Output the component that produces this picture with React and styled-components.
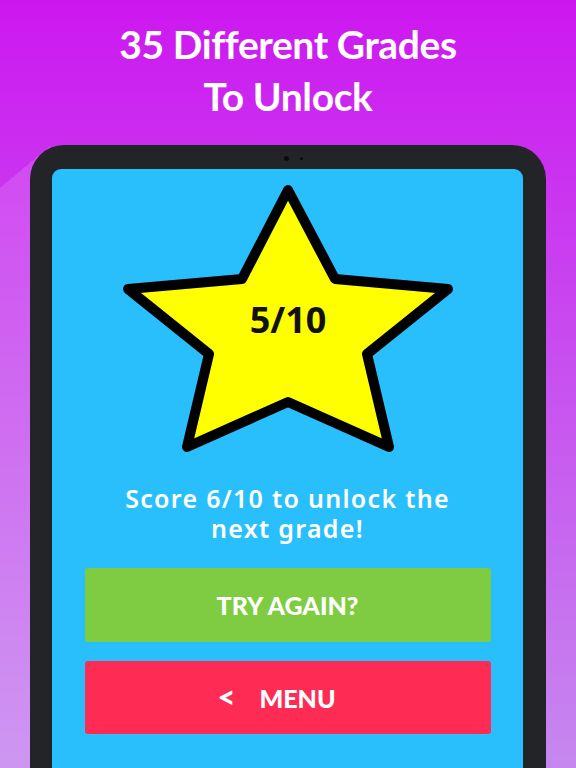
import React from 'react';
import styled, { createGlobalStyle } from 'styled-components';

const Global = createGlobalStyle`
  html, body {
    margin: 0;
    padding: 0;
  }
  body {
    width: 576px;
    height: 768px;
    overflow: hidden;
  }
`

const Page = styled.div`
  width: 576px;
  height: 768px;
  overflow: hidden;
  display: flex;
  flex-direction: column;
  background:
    linear-gradient(140deg, rgba(255,255,255,0) 23.2%, rgba(255,255,255,0.13) 23.2%) 0 0 / 50px 100% no-repeat,
    linear-gradient(180deg, #cd17f0 0%, #c84cef 45%, #c688ef 100%);
`

const Title = styled.h1`
  margin: 0;
  padding-top: 18px;
  height: 145px;
  flex-shrink: 0;
  box-sizing: border-box;
  text-align: center;
  color: #fff;
  font-family: "Lato", "Liberation Sans", sans-serif;
  font-weight: 700;
  font-size: 39px;
  letter-spacing: -0.4px;
  line-height: 52px;
`

const Tablet = styled.div`
  margin-left: 30px;
  width: 516px;
  height: 680px;
  flex-shrink: 0;
  box-sizing: border-box;
  padding: 24px 23px 0 22px;
  background: #232428;
  border-radius: 34px 34px 0 0;
  position: relative;
`

const Camera = styled.span`
  position: absolute;
  top: ${p => p.size === 'big' ? 11 : 12}px;
  left: ${p => p.x}px;
  width: ${p => p.size === 'big' ? 5 : 3}px;
  height: ${p => p.size === 'big' ? 5 : 3}px;
  border-radius: 50%;
  background: #0c0c10;
`

const Screen = styled.div`
  height: 100%;
  background: #29bffd;
  border-radius: 9px 9px 0 0;
  display: flex;
  flex-direction: column;
  align-items: center;
  padding-top: 9px;
  box-sizing: border-box;
`

const Message = styled.p`
  margin: 25px 0 0;
  color: #fff;
  text-align: center;
  font-family: "Noto Sans", "DejaVu Sans", sans-serif;
  font-weight: 600;
  font-size: 25px;
  line-height: 30px;
  letter-spacing: 1.3px;
`

const Buttons = styled.div`
  margin-top: 25px;
  display: flex;
  flex-direction: column;
  gap: 19px;
`

const Button = styled.button`
  width: 406px;
  height: ${p => p.tall ? 74 : 73}px;
  border: none;
  border-radius: 3px;
  padding: 0 ${p => p.shift || 0}px 0 0;
  background: ${p => p.color};
  color: #fff;
  font-family: "Lato", "Liberation Sans", sans-serif;
  font-weight: 900;
  font-size: 25px;
  display: flex;
  align-items: center;
  justify-content: center;
  gap: 24px;
  cursor: pointer;
`

const Arrow = styled.span`
  font-size: 31px;
  font-weight: 900;
  line-height: 1;
  margin-top: -2px;
`

function Star({ score }) {
  return (
    <svg width="340" height="280" viewBox="117 178 340 280">
      <polygon
        points="287,190 334,279 447,289 366,354 388,447 287,402 186,447 208,354 127,289 241,279"
        fill="#ffff00"
        stroke="#000"
        strokeWidth="10"
        strokeLinejoin="round"
      />
      <text
        x="287"
        y="333"
        textAnchor="middle"
        fontFamily="Noto Sans, DejaVu Sans, sans-serif"
        fontWeight="700"
        fontSize="36"
        fill="#111"
      >{score}</text>
    </svg>
  );
}

export default function App() {
  return (
    <Page>
      <Global />
      <Title>35 Different Grades<br />To Unlock</Title>
      <Tablet>
        <Camera size="big" x={254} />
        <Camera x={270} />
        <Screen>
          <Star score="5/10" />
          <Message>Score 6/10 to unlock the<br />next grade!</Message>
          <Buttons>
            <Button tall color="#7fcc42">TRY AGAIN?</Button>
            <Button color="#fe2c55" shift={22}><Arrow>&lt;</Arrow>MENU</Button>
          </Buttons>
        </Screen>
      </Tablet>
    </Page>
  );
}
